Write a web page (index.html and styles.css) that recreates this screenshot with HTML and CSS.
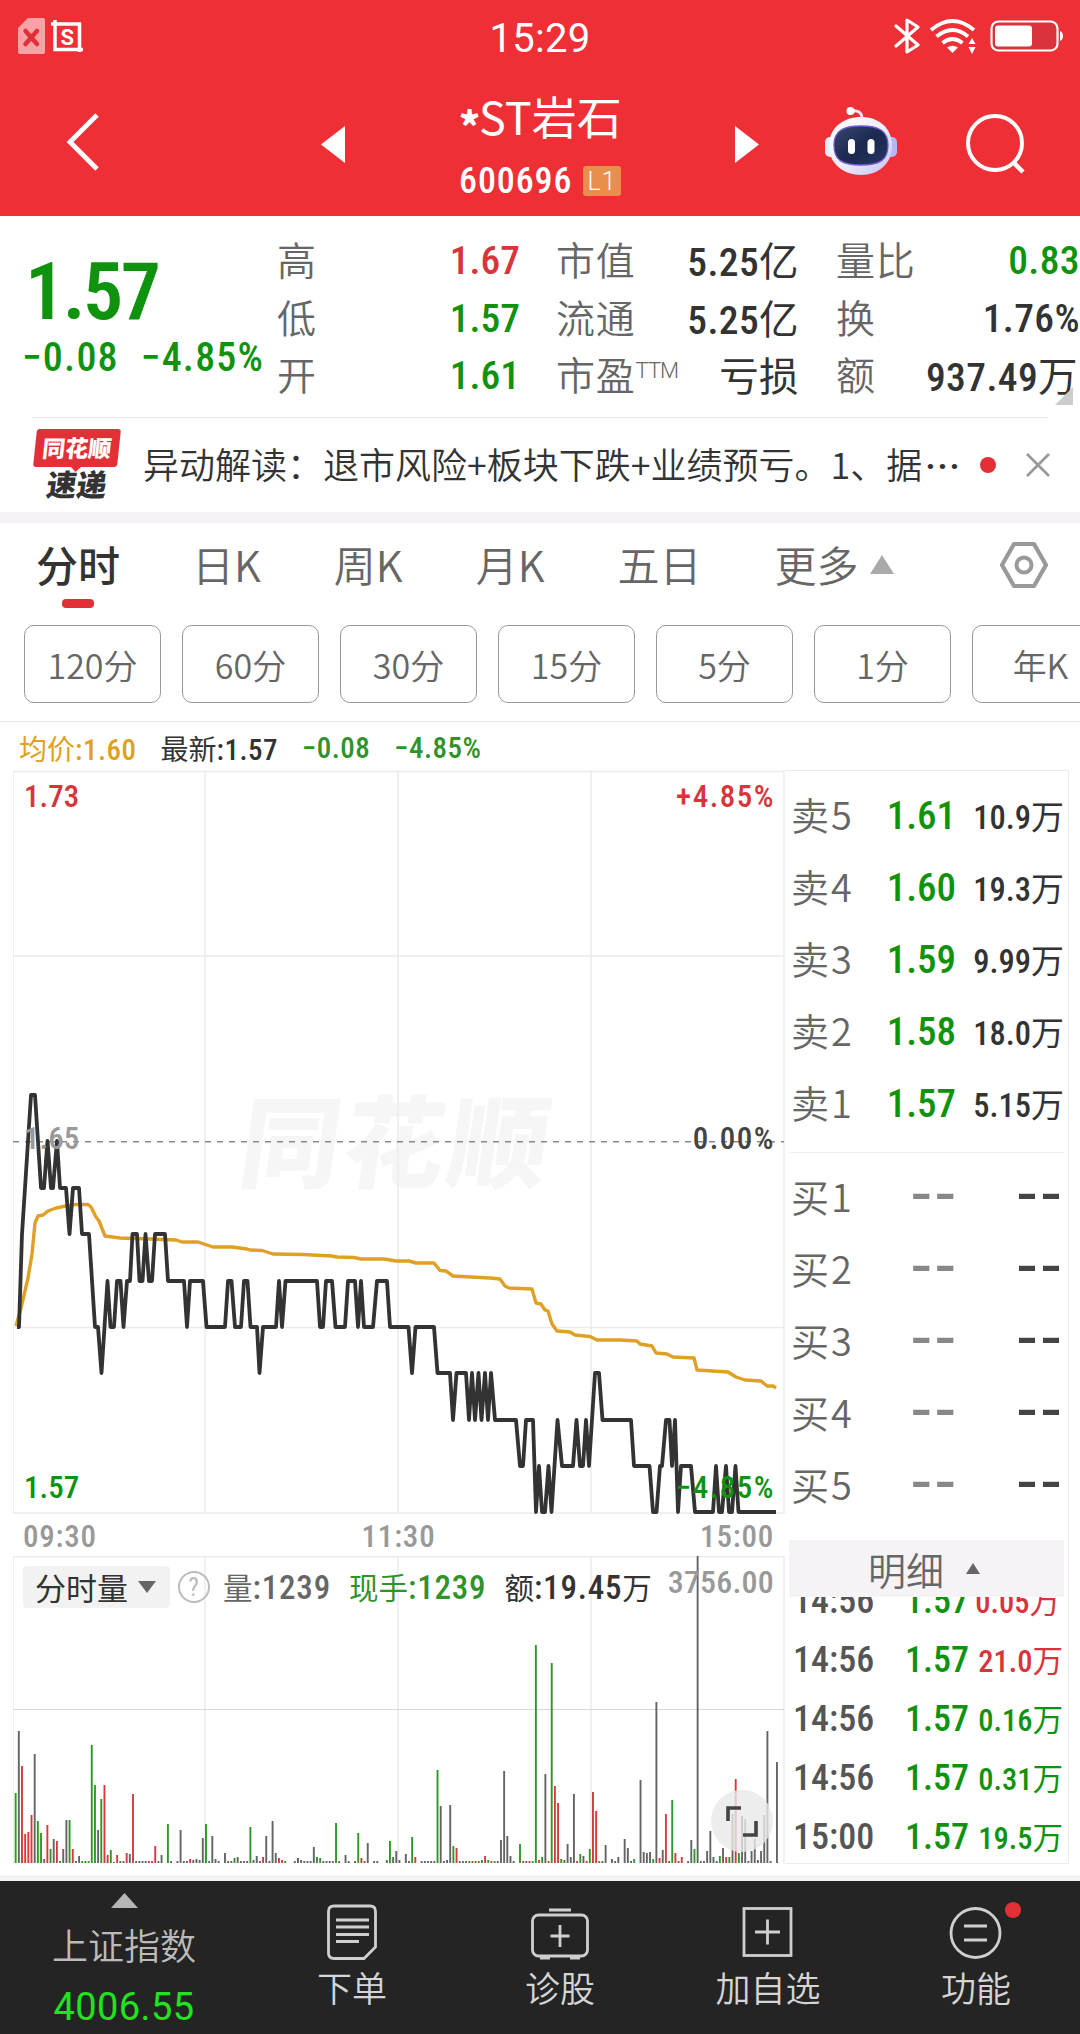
FILE: index.html
```html
<!DOCTYPE html>
<html lang="zh-CN">
<head>
    <meta charset="UTF-8">
    <meta name="viewport" content="width=device-width, initial-scale=1.0">
    <title>*ST岩石 600696</title>
    <link rel="stylesheet" href="styles.css">
</head>
<body>
<div class="app">
    <!-- 顶部 -->
    <header class="header">
        <div class="status-bar">
            <svg class="status-left" width="70" height="40" viewBox="0 0 70 40">
                <path d="M10 2H25Q27 2 27 4V36Q27 38 25 38H2Q0 38 0 36V12Z" fill="#f9a3a6"/>
                <path d="M7.500 15L19 28M19 15L7.500 28" stroke="#e0303a" stroke-width="4.500" stroke-linecap="round"/>
                <path d="M33 8H61.500V36M37 4V33.500H65" fill="none" stroke="#fff" stroke-width="3.500"/>
                <text x="49.300" y="28.500" class="shot-s">S</text>
            </svg>
            <span class="clock">15:29</span>
            <svg class="status-right" width="170" height="40" viewBox="0 0 170 40">
                <path d="M2 10L24 29L13 36V4L24 11L2 30" fill="none" stroke="#fff" stroke-width="3.200" stroke-linejoin="round" stroke-linecap="round"/>
                <g fill="none" stroke="#fff" stroke-width="3.800">
                    <path d="M37 14Q58.500 -4 80 14"/>
                    <path d="M42.500 20.500Q58.500 7.500 74 20.500"/>
                    <path d="M48.500 27Q58.500 19 68.500 27"/>
                </g>
                <path d="M53 31.500Q58.500 28 64 31.500L58.500 37Z" fill="#fff"/>
                <path d="M74.500 28L78 22L81.500 28ZM74.500 31L78 38L81.500 31Z" fill="#fff"/>
                <rect x="97.500" y="5.500" width="66" height="29" rx="7" fill="#d9343b" stroke="#fff" stroke-width="2.200"/>
                <rect x="101" y="9.500" width="37" height="21" rx="3" fill="#fff"/>
                <path d="M166 15Q169 16 169 20T166 25Z" fill="#fff"/>
            </svg>
        </div>
        <div class="title-bar">
            <svg class="back" width="36" height="62" viewBox="0 0 36 62"><path d="M31 4L4 31L31 58" fill="none" stroke="#fff" stroke-width="4.800"/></svg>
            <svg class="prev" width="24" height="37" viewBox="0 0 24 37"><path d="M24 0V37L0 18.500Z" fill="#fff"/></svg>
            <div class="stock">
                <div class="stock-name"><span class="star">*</span>ST岩石</div>
                <div class="stock-code"><span class="num">600696</span><span class="level">L1</span></div>
            </div>
            <svg class="next" width="24" height="37" viewBox="0 0 24 37"><path d="M0 0V37L24 18.500Z" fill="#fff"/></svg>
            <svg class="robot" width="74" height="70" viewBox="0 0 74 70">
                <defs>
                    <linearGradient id="shell" x1="0" y1="0" x2="1" y2="1">
                        <stop offset="0" stop-color="#fff"/>
                        <stop offset=".5" stop-color="#eeeefc"/>
                        <stop offset="1" stop-color="#c4c2f6"/>
                    </linearGradient>
                    <linearGradient id="face" x1="0" y1="0" x2="1" y2="1">
                        <stop offset="0" stop-color="#39456f"/>
                        <stop offset=".5" stop-color="#1c2a50"/>
                        <stop offset="1" stop-color="#263560"/>
                    </linearGradient>
                </defs>
                <path d="M26 5Q38 3 38 13" fill="none" stroke="#fde4ea" stroke-width="3"/>
                <circle cx="26.500" cy="5" r="4" fill="#fff"/>
                <rect x="1" y="31" width="12" height="20" rx="5" fill="#e8eafc"/>
                <rect x="61" y="31" width="12" height="20" rx="5" fill="#b6b6f3"/>
                <path d="M37 11C54 11 68 21 68 40C68 58 54 69 37 69S5 58 5 40C5 21 20 11 37 11Z" fill="url(#shell)"/>
                <path d="M37 20C55 20 64 25 64 39C64 54 56 59 37 59S10 54 10 39C10 25 19 20 37 20Z" fill="url(#face)" stroke="#7058d0" stroke-width="1.300"/>
                <rect x="24" y="33" width="7" height="15" rx="3.500" fill="#fff"/>
                <rect x="43.500" y="33" width="7" height="15" rx="3.500" fill="#fff"/>
            </svg>
            <svg class="search" width="64" height="64" viewBox="0 0 64 64"><circle cx="29" cy="32" r="27" fill="none" stroke="#fff" stroke-width="4"/><path d="M47 51L57 61" stroke="#fff" stroke-width="4.500"/></svg>
        </div>
    </header>

    <!-- 报价 -->
    <section class="quote">
        <div class="quote-main">
            <div class="price num green">1.57</div>
            <div class="change num green"><span>−0.08</span><span>−4.85%</span></div>
        </div>
        <div class="quote-col col-a">
            <div class="cell"><span>高</span><b class="num red">1.67</b></div>
            <div class="cell"><span>低</span><b class="num green">1.57</b></div>
            <div class="cell"><span>开</span><b class="num green">1.61</b></div>
        </div>
        <div class="quote-col col-b">
            <div class="cell"><span>市值</span><b class="num">5.25<i>亿</i></b></div>
            <div class="cell"><span>流通</span><b class="num">5.25<i>亿</i></b></div>
            <div class="cell"><span>市盈<sup>TTM</sup></span><b class="num"><i>亏损</i></b></div>
        </div>
        <div class="quote-col col-c">
            <div class="cell"><span>量比</span><b class="num green">0.83</b></div>
            <div class="cell"><span>换</span><b class="num">1.76%</b></div>
            <div class="cell"><span>额</span><b class="num wan">937.49<i>万</i></b></div>
        </div>
        <div class="corner"></div>
    </section>

    <!-- 资讯 -->
    <section class="news">
        <div class="news-logo">
            <div class="logo-top">同花顺</div>
            <div class="logo-bottom">速递</div>
        </div>
        <div class="news-text">异动解读：退市风险+板块下跌+业绩预亏。1、据<span class="dots">···</span></div>
        <div class="red-dot"></div>
        <svg class="close" width="26" height="26" viewBox="0 0 26 26"><path d="M2 2L24 24M24 2L2 24" stroke="#999" stroke-width="2.800"/></svg>
    </section>

    <!-- 周期 -->
    <nav class="tabs">
        <div class="tab active">分时</div>
        <div class="tab">日K</div>
        <div class="tab">周K</div>
        <div class="tab">月K</div>
        <div class="tab">五日</div>
        <div class="tab more">更多<svg width="24" height="19" viewBox="0 0 24 19"><path d="M12 0L24 19H0Z" fill="#aaa"/></svg></div>
        <svg class="setting" width="50" height="48" viewBox="0 0 50 48"><path d="M15 3H35L47 24L35 45H15L3 24Z" fill="none" stroke="#999" stroke-width="4.200" stroke-linejoin="round"/><circle cx="25" cy="24" r="7.500" fill="none" stroke="#999" stroke-width="4"/></svg>
    </nav>
    <div class="periods">
        <div class="period">120分</div>
        <div class="period">60分</div>
        <div class="period">30分</div>
        <div class="period">15分</div>
        <div class="period">5分</div>
        <div class="period">1分</div>
        <div class="period">年K</div>
    </div>
    <div class="latest num">
        <span class="avg"><i>均价</i>:1.60</span>
        <span class="last"><i>最新</i>:1.57</span>
        <span class="diff">−0.08</span>
        <span class="diff">−4.85%</span>
    </div>

    <div class="board">
        <div class="charts">
            <svg class="price-chart" width="772" height="744" viewBox="13 770 772 744">
                <text class="watermark" transform="translate(236 1180) skewX(-8)" textLength="308">同花顺</text>
                <path class="grid" d="M13 771.500H784V1513H13ZM205 771V1513M398 771V1513M591 771V1513M13 956H784M13 1327.500H784"/>
                <path d="M13 1141.700H784" stroke="#888" stroke-width="1.600" stroke-dasharray="6 6"/>
                <polyline class="avg-line" points="16,1326 21,1308 28,1278 32,1254 35,1223 38,1216 43,1215 48,1211 56,1208 66,1206 76,1204.500 88,1204.500 91,1207 96,1217 99,1221 105,1236 120,1238 150,1239 176,1240 182,1242 198,1242 213,1247 232,1247 247,1249 250,1250 262,1250.500 273,1254 303,1254.500 332,1256 337,1257 354,1257.500 361,1259 384,1259 396,1261 409,1261 416,1263 434,1263 440,1270.500 446,1271 453,1276 471,1277 490,1278 500,1279 505,1286 509,1288 532,1289 536,1303 541,1304 545,1310 548,1311 552,1324 557,1331 570,1332 575,1335 590,1336.500 597,1340 620,1340 637,1341 640,1344 652,1346 656,1353 667,1354 673,1357 694,1358 697,1370 728,1372 736,1377 745,1380 761,1381 767,1386 773,1386 776,1388"/>
                <polyline class="price-line" points="17,1327 19,1327 22,1234 25,1188 31,1095 35,1095 41,1188 44,1188 47.500,1141 51,1188 53,1188 57,1141 60,1188 66,1188 69.500,1234 73,1188 79,1188 82,1234 89,1234 95,1327 98,1327 101.500,1373 107.500,1281 110.500,1327 114,1327 117,1281 120.500,1281 123.500,1327 127,1281 130,1281 132.500,1234 137,1234 139.500,1281 142.500,1281 145.500,1234 149,1281 152,1281 155,1234 165,1234 168,1281 184,1281 187,1327 190,1281 203,1281 206.500,1327 225,1327 228,1281 231.500,1281 235,1327 241,1327 244,1281 247.500,1281 250.500,1327 257,1327 259.500,1373 263,1327 276,1327 279,1281 282,1327 285.500,1281 317,1281 320,1327 323,1327 326,1281 332,1281 335.500,1327 345,1327 348,1281 355,1281 358,1327 361,1281 364,1327 373,1327 377,1281 387,1281 390,1327 408.500,1327 412,1373 415.500,1327 434,1327 437.500,1373 450,1373 453,1420 456.500,1373 466,1373 469,1420 472,1373 475,1420 478.500,1373 481.500,1420 485,1373 488,1420 491,1373 495,1420 516,1420 520,1466 523,1466 526,1420 533,1420 536,1512 539,1466 542,1512 545,1512 548.500,1466 551.500,1512 557.500,1420 562,1466 573,1466 576.500,1420 580,1466 583,1466 586,1420 589,1466 595,1373 599,1373 602.500,1420 631,1420 634,1466 649.500,1466 653,1512 656.500,1512 660,1466 662,1466 666,1420 669.500,1420 672,1466 675,1420 678,1512 681,1466 691,1466 695,1512 713,1512 716,1466 719,1512 722,1512 726,1466 729,1512 732,1512 735.500,1466 738.500,1512 776,1512"/>
                <g class="scale">
                    <text x="24" y="807" fill="#d9343b">1.73</text>
                    <text x="24" y="1149" fill="#999">1.65</text>
                    <text x="24" y="1498" fill="#0f930f">1.57</text>
                    <g class="percent">
                        <text x="775" y="807" fill="#d9343b">+4.85%</text>
                        <text x="775" y="1149" fill="#444">0.00%</text>
                        <text x="775" y="1498" fill="#0f930f">−4.85%</text>
                    </g>
                </g>
            </svg>
            <div class="axis num"><span>09:30</span><span>11:30</span><span>15:00</span></div>
            <div class="volume">
                <svg width="772" height="308" viewBox="13 1556 772 308">
                    <path class="grid" d="M13 1556.500H784V1863.500M13 1556V1863M205 1556V1863M398 1556V1863M591 1556V1863"/>
                    <path d="M13 1709.500H784" stroke="#d8d8d8"/>
                    <g id="bars"></g>
                </svg>
                <div class="volume-head num">
                    <div class="volume-type"><i>分时量</i><svg width="18" height="12" viewBox="0 0 18 12"><path d="M0 0H18L9 12Z" fill="#666"/></svg></div>
                    <div class="help">?</div>
                    <span class="v1"><i>量</i>:1239</span>
                    <span class="v2"><i>现手</i>:1239</span>
                    <span class="v3"><i>额</i>:19.45<i>万</i></span>
                    <span class="v4">3756.00</span>
                </div>
                <div class="expand"><svg width="32" height="32" viewBox="0 0 32 32"><path d="M2 16V3H15M17 30H30V16" fill="none" stroke="#444" stroke-width="3.600"/></svg></div>
            </div>
        </div>

        <!-- 五档 -->
        <aside class="depth">
            <div class="orders sell">
                <div class="order"><span>卖5</span><b class="num">1.61</b><em class="num">10.9<i>万</i></em></div>
                <div class="order"><span>卖4</span><b class="num">1.60</b><em class="num">19.3<i>万</i></em></div>
                <div class="order"><span>卖3</span><b class="num">1.59</b><em class="num">9.99<i>万</i></em></div>
                <div class="order"><span>卖2</span><b class="num">1.58</b><em class="num">18.0<i>万</i></em></div>
                <div class="order"><span>卖1</span><b class="num">1.57</b><em class="num">5.15<i>万</i></em></div>
            </div>
            <div class="orders buy">
                <div class="order"><span>买1</span><b class="none">--</b><em class="none">--</em></div>
                <div class="order"><span>买2</span><b class="none">--</b><em class="none">--</em></div>
                <div class="order"><span>买3</span><b class="none">--</b><em class="none">--</em></div>
                <div class="order"><span>买4</span><b class="none">--</b><em class="none">--</em></div>
                <div class="order"><span>买5</span><b class="none">--</b><em class="none">--</em></div>
            </div>
            <div class="detail-title">明细<svg width="14" height="11" viewBox="0 0 14 11"><path d="M7 0L14 11H0Z" fill="#666"/></svg></div>
            <div class="ticks num">
                <div class="tick"><span>14:56</span><b>1.57</b><em class="red cut">0.05<i>万</i></em></div>
                <div class="tick"><span>14:56</span><b>1.57</b><em class="red">21.0<i>万</i></em></div>
                <div class="tick"><span>14:56</span><b>1.57</b><em>0.16<i>万</i></em></div>
                <div class="tick"><span>14:56</span><b>1.57</b><em>0.31<i>万</i></em></div>
                <div class="tick"><span>15:00</span><b>1.57</b><em>19.5<i>万</i></em></div>
            </div>
        </aside>
    </div>

    <!-- 底部菜单 -->
    <footer class="bottom">
        <div class="index">
            <svg width="27" height="15" viewBox="0 0 27 15"><path d="M13.500 0L27 15H0Z" fill="#b5b5b5"/></svg>
            <div class="index-name">上证指数</div>
            <div class="index-value">4006.55</div>
        </div>
        <div class="menu">
            <svg width="60" height="60" viewBox="0 0 60 60"><path d="M12 5H48Q53.500 5 53.500 10.500V46L42 57.500H12Q6.500 57.500 6.500 52V10.500Q6.500 5 12 5Z"/><path d="M14 19H47M14 26H47M14 33.500H47M14 40.500H37"/></svg>
            <span>下单</span>
        </div>
        <div class="menu">
            <svg width="60" height="60" viewBox="0 0 60 60"><rect x="2.500" y="14" width="55" height="41" rx="6"/><path d="M19 9H41M30 24V46M20.500 35H39.500M10 57H20M40 57H50"/></svg>
            <span>诊股</span>
        </div>
        <div class="menu">
            <svg width="60" height="60" viewBox="0 0 60 60"><rect x="6" y="7.500" width="47" height="47"/><path d="M29.500 18.500V43.500M17 31H42"/></svg>
            <span>加自选</span>
        </div>
        <div class="menu">
            <svg width="60" height="60" viewBox="0 0 60 60"><circle cx="29.500" cy="32" r="24.500"/><path d="M18 25H41M18 39H41"/></svg>
            <span>功能</span>
            <div class="badge"></div>
        </div>
    </footer>
</div>

<script>
    // 每分钟成交量: 颜色(r涨 g跌 k平) + 高度
    const volume = ("g70 k132 r97 r29 r31 r48 k109 g42 g30 k4 r38 g14 k24 r22 g2 k14 k43 g43 r14 k2 k7 g2 g2 g2 g118 g78 k33 g64 r78 r8 " +
        "g13 k1 r8 k2 k2 r10 k9 r69 k2 k2 k2 k2 r2 r2 r17 k2 k8 k0 g39 k2 k0 k2 k33 k2 k2 r4 k3 k4 k3 k25 " +
        "g39 k2 k27 k4 k2 k0 k10 k2 k2 g5 k6 k2 k2 k2 g36 k3 k7 k2 r6 k27 k2 k42 k10 r5 r3 g2 k0 k0 k2 k5 " +
        "k3 k2 k2 k2 k16 g6 g5 k2 k2 k2 k2 g40 k2 k0 k8 k2 k0 k2 g30 r5 k2 k20 k0 k2 k2 k0 k0 k3 g22 k6 " +
        "k12 k3 k0 k9 k2 g26 r6 k0 k2 k2 k2 k2 k2 g93 k57 k2 k3 k58 g17 r15 k2 k2 k2 g2 r2 g2 r2 g3 r7 g3 " +
        "r2 g2 k2 k23 k92 k27 k7 k2 k0 g19 r2 k2 r2 g2 g218 r3 g6 k89 r2 g200 r77 r60 g4 k3 k19 k6 k69 r2 g9 k7 " +
        "r2 g14 r71 r52 g2 k2 k18 k0 k4 k2 k6 k0 k24 k15 k2 g4 k0 k83 k11 k10 k11 g4 k161 r5 k13 r49 g2 g63 r10 k2 " +
        "r6 k0 k2 k23 g14 k307 k2 k2 k12 k32 k6 k2 g7 k15 r6 g6 k49 r84 g10 k47 k44 k2 k12 k24 k3 k12 k48 k132 k2 k0 k101").split(" ");
    const colors = { r: "#d9393c", g: "#2f972a", k: "#646464" };
    let html = "";
    volume.forEach((item, i) => {
        const h = Number(item.slice(1));
        html += `<rect x="${(14.700 + i * 3.172).toFixed(2)}" y="${1863 - h}" width="1.900" height="${h}" fill="${colors[item[0]]}"/>`;
    });
    document.getElementById("bars").innerHTML = html;
</script>
</body>
</html>
```
FILE: styles.css
```css
* {
    box-sizing: border-box;
    margin: 0;
    padding: 0;
}

body {
    width: 1080px;
    background: #fff;
    color: #333;
    font-family: Roboto, "Noto Sans CJK SC", sans-serif;
    overflow: hidden;
}

svg {
    display: block;
    flex: none;
}

i, em {
    font-style: normal;
}

.app {
    width: 1080px;
    height: 2034px;
    display: flex;
    flex-direction: column;
    overflow: hidden;
}

/* 窄体数字 */
.num {
    font-family: Roboto, "Noto Sans CJK SC", sans-serif;
    font-stretch: 85%;
    font-weight: 500;
    white-space: nowrap;
}

.num i {
    font-family: "Noto Sans CJK SC", sans-serif;
    font-weight: 400;
}

.green { color: #0f930f; }
.red { color: #d9343b; }

/* 顶部 */
.header {
    height: 216px;
    background: #ef2f36;
    color: #fff;
}

.status-bar {
    height: 72px;
    padding: 0 16px 0 18px;
    display: flex;
    align-items: center;
    justify-content: space-between;
}

.status-left { margin-right: 98px; }

.shot-s {
    font: 700 22px Roboto, sans-serif;
    fill: #fff;
    text-anchor: middle;
}

.clock {
    font-size: 40px;
    line-height: 40px;
    padding-top: 5px;
    letter-spacing: 0.3px;
}

.title-bar {
    height: 144px;
    padding-left: 66px;
    display: flex;
}

.back { margin-top: 39px; }
.prev { margin: 54px 0 0 219px; }
.next { margin: 54px 0 0 114px; }
.robot { margin: 34px 0 0 65px; }
.search { margin: 39px 0 0 68px; }

.stock {
    width: 162px;
    margin-left: 114px;
}

.stock-name {
    margin-top: 14px;
    font: 400 45px/60px "Noto Sans CJK SC", sans-serif;
    white-space: nowrap;
}

.star {
    display: inline-block;
    width: 20px;
    font-weight: 900;
    font-size: 40px;
    transform: translateY(7px);
}

.stock-code {
    display: flex;
    align-items: center;
    justify-content: space-between;
    height: 36px;
    margin-top: 15px;
    font-size: 36px;
    letter-spacing: 0.9px;
}

.level {
    width: 38px;
    height: 30px;
    border-radius: 3px;
    background: #e88f4e;
    font: 300 25px/31px Roboto, sans-serif;
    text-align: center;
}

/* 报价 */
.quote {
    position: relative;
    height: 201px;
    padding-top: 16px;
    display: flex;
}

.quote-main {
    width: 277px;
    padding: 17px 0 0 28px;
}

.price {
    font-size: 80px;
    line-height: 86px;
    font-stretch: 78%;
    font-weight: 600;
    letter-spacing: -2.5px;
    margin-left: -3px;
}

.change {
    display: flex;
    gap: 22px;
    margin-left: -6px;
    font-size: 40px;
    line-height: 46px;
    letter-spacing: 1.2px;
}

.quote-col { height: 174px; }
.col-a { width: 243px; }
.col-b { width: 243px; margin-left: 36px; }
.col-c { width: 244px; margin-left: 37px; }

.cell {
    height: 57.500px;
    display: flex;
    align-items: center;
    justify-content: space-between;
    font: 350 39px/57px "Noto Sans CJK SC", sans-serif;
    color: #666;
    white-space: nowrap;
}

.cell span {
    position: relative;
    top: -2px;
    letter-spacing: 0.8px;
}

.cell b {
    color: #333;
    font-size: 39.5px;
}

.col-b b, .col-c b { letter-spacing: 0.4px; }

.cell b.green { color: #0f930f; }
.cell b.red { color: #d9343b; }
.wan { margin-right: 2px; }

.cell sup {
    font: 300 22px/22px Roboto, sans-serif;
    vertical-align: 12px;
    letter-spacing: -1px;
}

.corner {
    position: absolute;
    right: 7px;
    top: 171px;
    border: 9px solid #ccc;
    border-top-color: transparent;
    border-left-color: transparent;
}

/* 资讯 */
.news {
    position: relative;
    height: 106px;
    padding-left: 33px;
    display: flex;
    align-items: center;
    border-bottom: 11px solid #f5f3f5;
}

.news::before {
    content: '';
    position: absolute;
    left: 32px;
    right: 32px;
    top: 0;
    height: 1px;
    background: #e8e8e8;
}

.news-logo {
    width: 88px;
    font-family: "Noto Sans CJK SC", sans-serif;
    font-weight: 900;
    text-align: center;
}

.logo-top {
    position: relative;
    width: 84px;
    height: 38px;
    margin-left: 2px;
    border-radius: 3px;
    background: #e33036;
    color: #fff;
    font-size: 23px;
    line-height: 37px;
    transform: skewX(-6deg);
}

.logo-top::after {
    content: '';
    position: absolute;
    left: 37px;
    top: 37px;
    border: 6px solid transparent;
    border-top-color: #e33036;
    border-bottom: none;
}

.logo-bottom {
    color: #333;
    font-size: 30px;
    line-height: 33px;
    transform: skewX(-8deg);
}

.news-text {
    flex: none;
    margin-left: 22px;
    width: 817px;
    font: 350 36px/50px "Noto Sans CJK SC", sans-serif;
    white-space: nowrap;
}

.dots {
    margin-left: 3px;
    font-family: Roboto, sans-serif;
    font-weight: 600;
    letter-spacing: 1.5px;
}

.red-dot {
    width: 16px;
    height: 16px;
    margin-left: 20px;
    border-radius: 50%;
    background: #e33036;
}

.close { margin-left: 29px; }

/* 周期 */
.tabs {
    position: relative;
    height: 102px;
    padding: 10px 0 0 36px;
    display: flex;
}

.tab {
    position: relative;
    height: 62px;
    font: 350 42px/62px "Noto Sans CJK SC", sans-serif;
    color: #666;
    white-space: nowrap;
    margin-right: 73px;
}

.tab.active {
    color: #333;
    font-weight: 500;
    margin-right: 72px;
}

.tab.active::after {
    content: '';
    position: absolute;
    left: 26px;
    bottom: -13px;
    width: 32px;
    height: 9px;
    border-radius: 4px;
    background: #e33036;
}

.more {
    display: flex;
    align-items: center;
    gap: 11px;
    margin-right: 0;
}

.setting {
    margin: 8px 31px 0 auto;
}

.periods {
    height: 97px;
    padding-left: 24px;
    display: flex;
    gap: 21px;
    border-bottom: 1px solid #e8e8e8;
    overflow: hidden;
}

.period {
    flex: none;
    width: 137px;
    height: 78px;
    border: 1px solid #999;
    border-radius: 10px;
    font: 350 34px/77px "Noto Sans CJK SC", sans-serif;
    color: #666;
    text-align: center;
}

.latest {
    height: 48px;
    padding-left: 19px;
    display: flex;
    gap: 24px;
    font-size: 29px;
    line-height: 52px;
    letter-spacing: 0.5px;
}

.latest i { font-size: 28px; letter-spacing: 0; }
.avg { color: #e0a020; }
.diff { color: #2f932a; }

/* 分时图 */
.board {
    display: flex;
    height: 1111px;
    padding-left: 13px;
    border-bottom: 6px solid #f3f3f3;
}

.charts { width: 772px; }

.grid {
    fill: none;
    stroke: #ebebeb;
    stroke-width: 1.500;
}

.watermark {
    font: 900 100px "Noto Sans CJK SC", sans-serif;
    fill: #f6f6f6;
}

.avg-line {
    fill: none;
    stroke: #dfa024;
    stroke-width: 3.400;
    stroke-linejoin: round;
}

.price-line {
    fill: none;
    stroke: #333;
    stroke-width: 3.800;
    stroke-linejoin: round;
}

.scale {
    font: 500 31px Roboto, sans-serif;
    font-stretch: 85%;
}

.percent {
    text-anchor: end;
    letter-spacing: 1.500px;
}

.axis {
    height: 42px;
    padding: 0 11px 0 10px;
    display: flex;
    justify-content: space-between;
    color: #999;
    font-size: 31px;
    line-height: 45px;
    letter-spacing: 0.8px;
}

.volume { position: relative; }

.volume-head {
    position: absolute;
    left: 10px;
    top: 8px;
    width: 751px;
    height: 46px;
    display: flex;
    align-items: center;
    font-size: 33px;
    line-height: 44px;
    letter-spacing: 0.8px;
}

.volume-head i {
    font-size: 29.5px;
    letter-spacing: 0;
}

.volume-type {
    width: 147px;
    height: 42px;
    padding-left: 12px;
    display: flex;
    align-items: center;
    gap: 10px;
    border-radius: 4px;
    background: #f2f2f2;
    line-height: 42px;
}

.volume-head .volume-type i { font-size: 31px; }

.help {
    width: 32px;
    height: 32px;
    margin-left: 8px;
    border: 2px solid #bbb;
    border-radius: 50%;
    color: #bbb;
    font-size: 25px;
    line-height: 29px;
    text-align: center;
    font-weight: 400;
}

.v1 { margin-left: 13px; color: #666; }
.v2 { margin-left: 18px; color: #2f932a; }
.v3 { margin-left: 18px; }
.v4 { margin-left: auto; color: #999; position: relative; top: -5px; font-size: 32px; letter-spacing: 0.2px; }

.expand {
    position: absolute;
    left: 698px;
    top: 234px;
    width: 62px;
    height: 62px;
    border-radius: 50%;
    background: rgba(232, 232, 232, 0.8);
    display: flex;
    align-items: center;
    justify-content: center;
}

/* 五档 */
.depth {
    width: 284px;
    height: 1094px;
    padding: 0 4px;
    border: 1px solid #ebebeb;
    border-left: none;
}

.orders.sell {
    padding-top: 9px;
    height: 382px;
    border-bottom: 1px solid #f0f0f0;
}

.orders.buy {
    padding-top: 10px;
    height: 387px;
}

.order {
    display: flex;
    align-items: center;
    height: 72px;
    padding-left: 3px;
    font: 350 38px/72px "Noto Sans CJK SC", sans-serif;
    color: #666;
    white-space: nowrap;
}

.order span {
    width: 70px;
    letter-spacing: 2px;
    position: relative;
    top: -2px;
    left: -1px;
}

.buy .order span { top: -3px; }

.order b {
    width: 94px;
    font-size: 39px;
    color: #0f930f;
    text-align: right;
    font-weight: 500;
}

.order em {
    width: 108px;
    font-size: 32.5px;
    color: #333;
    text-align: right;
    font-weight: 500;
}

.order em i { font-size: 33px; }

.order .none {
    width: 98px;
    font-family: "Liberation Sans", sans-serif;
    font-size: 66px;
    letter-spacing: 2px;
    line-height: 60px;
    font-weight: 400;
    color: #888;
    position: relative;
    top: -8px;
}

.order em.none { color: #444; width: 107px; }

.detail-title {
    height: 57px;
    display: flex;
    align-items: center;
    padding-left: 79px;
    gap: 22px;
    background: #f5f3f5;
    font: 350 38px/55px "Noto Sans CJK SC", sans-serif;
    color: #666;
}

.ticks {
    height: 269px;
    padding-left: 4px;
    overflow: hidden;
    display: flex;
    flex-direction: column;
    justify-content: flex-end;
}

.tick {
    flex: none;
    display: flex;
    align-items: baseline;
    height: 59px;
    line-height: 59px;
    font-size: 36px;
    color: #555;
}

.tick span { width: 90px; }

.tick b {
    width: 86px;
    color: #0f930f;
    text-align: right;
    font-weight: 500;
}

.tick em {
    width: 94px;
    font-size: 30.5px;
    color: #0f930f;
    text-align: right;
}

.tick em.red { color: #d9343b; }
.tick em.cut { padding-right: 3px; }

/* 底部 */
.bottom {
    height: 153px;
    display: flex;
    background: #242424;
    color: #d5d5d5;
}

.index {
    width: 248px;
    padding-top: 12px;
    display: flex;
    flex-direction: column;
    align-items: center;
    color: #bbb;
}

.index-name {
    margin-top: 10px;
    font: 350 36px/52px "Noto Sans CJK SC", sans-serif;
}

.index-value {
    margin-top: 14px;
    font: 400 38px/46px Roboto, sans-serif;
    letter-spacing: 0.4px;
    color: #1fe51f;
}

.menu {
    position: relative;
    width: 208px;
    padding-top: 20px;
    display: flex;
    flex-direction: column;
    align-items: center;
    font: 350 35px/50px "Noto Sans CJK SC", sans-serif;
}

.menu span { margin-top: 1px; }

.menu svg {
    fill: none;
    stroke: #cfcfcf;
    stroke-width: 2.800;
}

.badge {
    position: absolute;
    left: 133px;
    top: 21px;
    width: 16px;
    height: 16px;
    border-radius: 50%;
    background: #e33036;
}
```
